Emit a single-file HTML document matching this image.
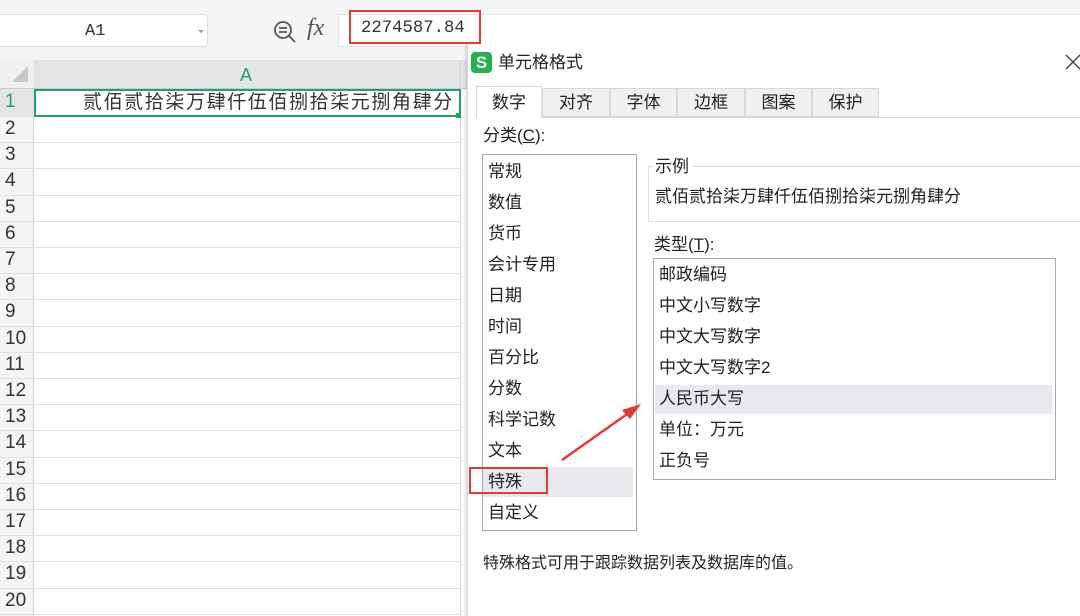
<!DOCTYPE html>
<html><head><meta charset="utf-8"><style>
*{margin:0;padding:0;box-sizing:border-box}
body{width:1080px;height:616px;overflow:hidden;background:#fff;font-family:"Liberation Sans","Noto Sans CJK SC",sans-serif;position:relative;color:#222}
.a{position:absolute}
.t{position:absolute;font-size:17px;white-space:nowrap;line-height:20px}
</style></head><body>
<div class="a" style="left:0;top:0;width:1080px;height:60px;background:#f4f5f6"></div>
<div class="a" style="left:-4px;top:14px;width:212px;height:33px;background:#fff;border:1px solid #e0e0e0;border-radius:4px"></div>
<div class="t" style="left:85px;top:22px;font-family:'Liberation Mono',monospace;font-size:17px;color:#333">A1</div>
<div class="a" style="left:198px;top:30px;border:3px solid transparent;border-top:3px solid #999"></div>
<svg class="a" style="left:272px;top:19px" width="26" height="26" viewBox="0 0 26 26"><circle cx="11" cy="11" r="8" fill="none" stroke="#555" stroke-width="1.8"/><path d="M7 9h8M7 13h8M17 17l6 6" stroke="#555" stroke-width="1.8"/></svg>
<div class="t" style="left:307px;top:18px;font-family:'Liberation Serif',serif;font-style:italic;font-size:24px;color:#555">fx</div>
<div class="a" style="left:338px;top:14px;width:760px;height:33px;background:#fff;border:1px solid #e4e4e4"></div>
<div class="a" style="left:349px;top:10px;width:132px;height:34px;border:2px solid #e53935"></div>
<div class="t" style="left:361px;top:19px;font-family:'Liberation Mono',monospace;font-size:17.3px;color:#333">2274587.84</div>
<div class="a" style="left:0;top:60px;width:467px;height:556px;background:#fff"></div>
<div class="a" style="left:0;top:60px;width:34px;height:556px;background:#f5f5f5;border-right:1px solid #d0d0d0"></div>
<div class="a" style="left:34px;top:60px;width:433px;height:29px;background:#e3e4e6;border-bottom:1px solid #ccc"></div>
<div class="a" style="left:0;top:60px;width:34px;height:29px;background:#f0f0f0;border-bottom:1px solid #ccc"></div>
<div class="a" style="left:12px;top:66px;width:0;height:0;border-left:16px solid transparent;border-bottom:16px solid #c8c8c8"></div>
<div class="t" style="left:240px;top:65px;color:#21a366;font-size:18px">A</div>
<div class="a" style="left:0;top:89px;width:34px;height:27px;background:#e3e4e6"></div>
<div class="a" style="left:460px;top:60px;width:1px;height:556px;background:#d4d4d4"></div>
<div id="rows"></div>
<div class="a" style="left:34px;top:89px;width:427px;height:28px;border:2px solid #21a366"></div>
<div class="a" style="left:456px;top:113px;width:5px;height:5px;background:#21a366"></div>
<div class="t" style="left:83px;top:93px;font-size:19px;letter-spacing:1.6px;color:#333">贰佰贰拾柒万肆仟伍佰捌拾柒元捌角肆分</div>
<div class="a" style="left:463px;top:44px;width:4px;height:572px;background:linear-gradient(to right,rgba(0,0,0,0),rgba(0,0,0,.12))"></div>
<div class="a" style="left:467px;top:44px;width:620px;height:572px;background:#fff;border-left:1px solid #d8d8d8"></div>
<div class="a" style="left:471px;top:52px;width:21px;height:21px;background:#22b14c;border-radius:4px;color:#fff;font-weight:bold;font-size:17px;text-align:center;line-height:21px">S</div>
<div class="t" style="left:498px;top:53px">单元格格式</div>
<svg class="a" style="left:1065px;top:54px" width="16" height="16"><path d="M1 1L15 15M15 1L1 15" stroke="#444" stroke-width="1.4"/></svg>
<div class="a" style="left:476px;top:117px;width:604px;height:1px;background:#d8d8d8"></div>
<div id="tabs"></div>
<div class="t" style="left:483px;top:126px">分类(<u>C</u>):</div>
<div class="a" style="left:482px;top:154px;width:155px;height:377px;border:1px solid #a8a8a8"></div>
<div class="a" style="left:483px;top:467px;width:150px;height:30px;background:#e8e9ec"></div>
<div id="cats"></div>
<div class="a" style="left:469px;top:467px;width:79px;height:27px;border:2px solid #e53935"></div>
<div class="a" style="left:648px;top:166px;width:440px;height:56px;border:1px solid #dcdcdc"></div>
<div class="t" style="left:652px;top:157px;background:#fff;padding:0 3px">示例</div>
<div class="t" style="left:655px;top:187px">贰佰贰拾柒万肆仟伍佰捌拾柒元捌角肆分</div>
<div class="t" style="left:654px;top:235px">类型(<u>T</u>):</div>
<div class="a" style="left:653px;top:258px;width:403px;height:222px;border:1px solid #a8a8a8"></div>
<div class="a" style="left:655px;top:385px;width:397px;height:29px;background:#e8e9ec"></div>
<div id="types"></div>
<svg class="a" style="left:0;top:0" width="1080" height="616"><path d="M562 460L630 412" stroke="#e53935" stroke-width="2.5"/><path d="M641 404L622 410L630 419Z" fill="#e53935"/></svg>
<div class="t" style="left:483px;top:554px;font-size:16px">特殊格式可用于跟踪数据列表及数据库的值。</div>
<script>
var h='';
for(var i=1;i<=20;i++){var y=i==1?89:116+(i-2)*26.2;var hh=i==1?27:26.2;
h+='<div class="a" style="left:0;top:'+(y+hh)+'px;width:461px;height:1px;background:#e0e0e0"></div>';
h+='<div class="t" style="left:0;width:30px;text-align:left;padding-left:5px;top:'+(y+3)+'px;font-size:19px;color:'+(i==1?'#21a366':'#333')+'">'+i+'</div>';}
document.getElementById('rows').innerHTML=h;
var tabs=['数字','对齐','字体','边框','图案','保护'],x=[476,542,610,677,745,812,879];h='';
tabs.forEach(function(t,i){h+='<div class="a" style="left:'+x[i]+'px;top:'+(i?88:86)+'px;width:'+(x[i+1]-x[i])+'px;height:'+(i?29:32)+'px;background:'+(i?'#f0f0f0':'#fff')+';border:1px solid #d8d8d8;'+(i?'':'border-bottom:none;')+'"></div><div class="t" style="left:'+x[i]+'px;width:'+(x[i+1]-x[i])+'px;text-align:center;top:93px">'+t+'</div>';});
document.getElementById('tabs').innerHTML=h;
var c=['常规','数值','货币','会计专用','日期','时间','百分比','分数','科学记数','文本','特殊','自定义'];h='';
c.forEach(function(t,i){h+='<div class="t" style="left:488px;top:'+(162+i*31)+'px">'+t+'</div>';});
document.getElementById('cats').innerHTML=h;
var ty=['邮政编码','中文小写数字','中文大写数字','中文大写数字2','人民币大写','单位：万元','正负号'];h='';
ty.forEach(function(t,i){h+='<div class="t" style="left:659px;top:'+(265+i*31)+'px">'+t+'</div>';});
document.getElementById('types').innerHTML=h;
</script>
</body></html>
